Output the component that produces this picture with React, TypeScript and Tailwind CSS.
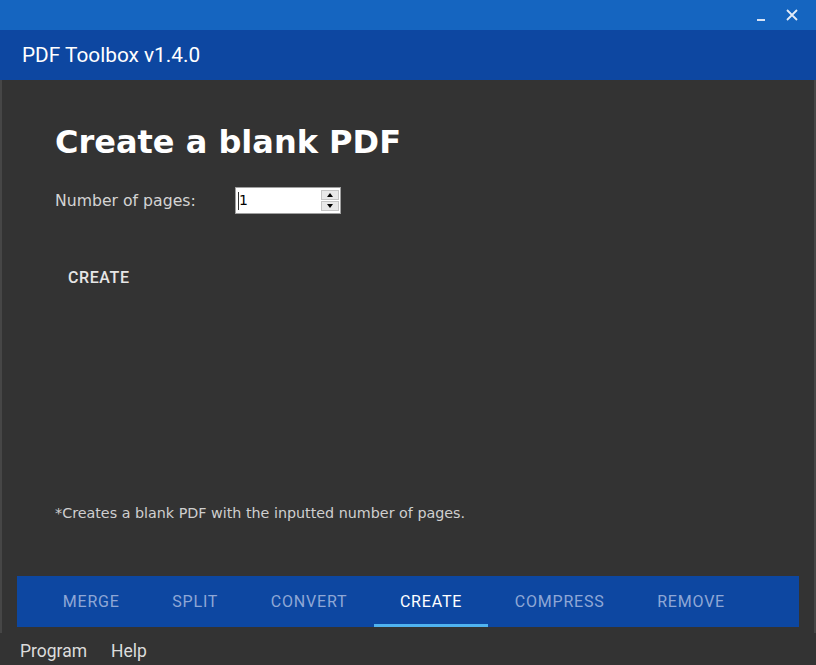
import React from "react";

const tabs = ["MERGE", "SPLIT", "CONVERT", "CREATE", "COMPRESS", "REMOVE"];

export default function App() {
  return (
    <div className="w-[816px] h-[665px] flex flex-col bg-[#333333] overflow-hidden" style={{ fontFamily: "Roboto, sans-serif" }}>
      {/* window title bar */}
      <div className="h-[30px] bg-[#1565c0] flex items-center justify-end pr-[18px] gap-[21px] shrink-0">
        <div className="w-[8px] h-[2px] bg-[#d6e2f5] mt-[10px]" />
        <svg width="12" height="12" viewBox="0 0 12 12" className="mb-[1px]">
          <path d="M1 1 L11 11 M11 1 L1 11" stroke="#e3ebf7" strokeWidth="1.8" />
        </svg>
      </div>
      {/* app header */}
      <div className="h-[50px] bg-[#0d47a1] flex items-center pl-[22px] pt-[1px] shrink-0">
        <span className="text-white text-[20.8px] leading-none">PDF Toolbox v1.4.0</span>
      </div>
      {/* main */}
      <div className="flex-1 flex flex-col border-x-2 border-[#464646] bg-[#333333]">
        <div className="flex-1 flex flex-col pl-[53px] pt-[44px]" style={{ fontFamily: '"DejaVu Sans", Verdana, sans-serif' }}>
          <h1 className="text-white font-bold text-[32px] leading-[36px]">Create a blank PDF</h1>
          <div className="flex items-center mt-[27px] h-[27px]">
            <span className="text-[#d4d4d4] text-[15.7px] w-[180px]">Number of pages:</span>
            <div className="w-[106px] h-[27px] bg-white border border-[#a0a0a0] flex items-center relative">
              <div className="w-[1px] h-[18px] bg-[#333] ml-[2px]" />
              <span className="text-[#000] text-[14px]" style={{ fontFamily: '"DejaVu Sans", sans-serif' }}>1</span>
              <div className="absolute right-[1px] top-[2px] flex flex-col gap-[1px]">
                <div className="w-[18px] h-[10px] bg-[#e8e8e8] border border-[#c4c4c4] flex items-center justify-center">
                  <div className="w-0 h-0 border-l-[3px] border-r-[3px] border-b-[4px] border-l-transparent border-r-transparent border-b-black" />
                </div>
                <div className="w-[18px] h-[10px] bg-[#e8e8e8] border border-[#c4c4c4] flex items-center justify-center">
                  <div className="w-0 h-0 border-l-[3px] border-r-[3px] border-t-[4px] border-l-transparent border-r-transparent border-t-black" />
                </div>
              </div>
            </div>
          </div>
          <div className="mt-[52px] ml-[13px] text-[#e6e6e6] text-[16px] font-medium tracking-[0.6px]" style={{ fontFamily: "Roboto, sans-serif" }}>
            CREATE
          </div>
          <div className="flex-1" />
          <div className="text-[#cfcfcf] text-[14.3px] mb-[52px]">*Creates a blank PDF with the inputted number of pages.</div>
        </div>
        <div className="mx-[15px] h-[51px] bg-[#0d47a1] flex items-stretch pl-[19.5px] mb-[6px]">
          {tabs.map((t) => {
            const active = t === "CREATE";
            return (
              <div
                key={t}
                className={
                  "relative flex items-center px-[26.3px] text-[16px] font-normal tracking-[0.8px] " +
                  (active ? "text-white" : "text-[#8fa7d6]")
                }
              >
                {t}
                {active && <div className="absolute left-0 right-0 bottom-0 h-[3px] bg-[#4fb3f0]" />}
              </div>
            );
          })}
        </div>
      </div>
      {/* menu bar */}
      <div className="h-[32px] flex items-center pl-[20px] pt-[4px] gap-[24px] text-[#dcdcdc] text-[17.5px] shrink-0">
        <span>Program</span>
        <span>Help</span>
      </div>
    </div>
  );
}
